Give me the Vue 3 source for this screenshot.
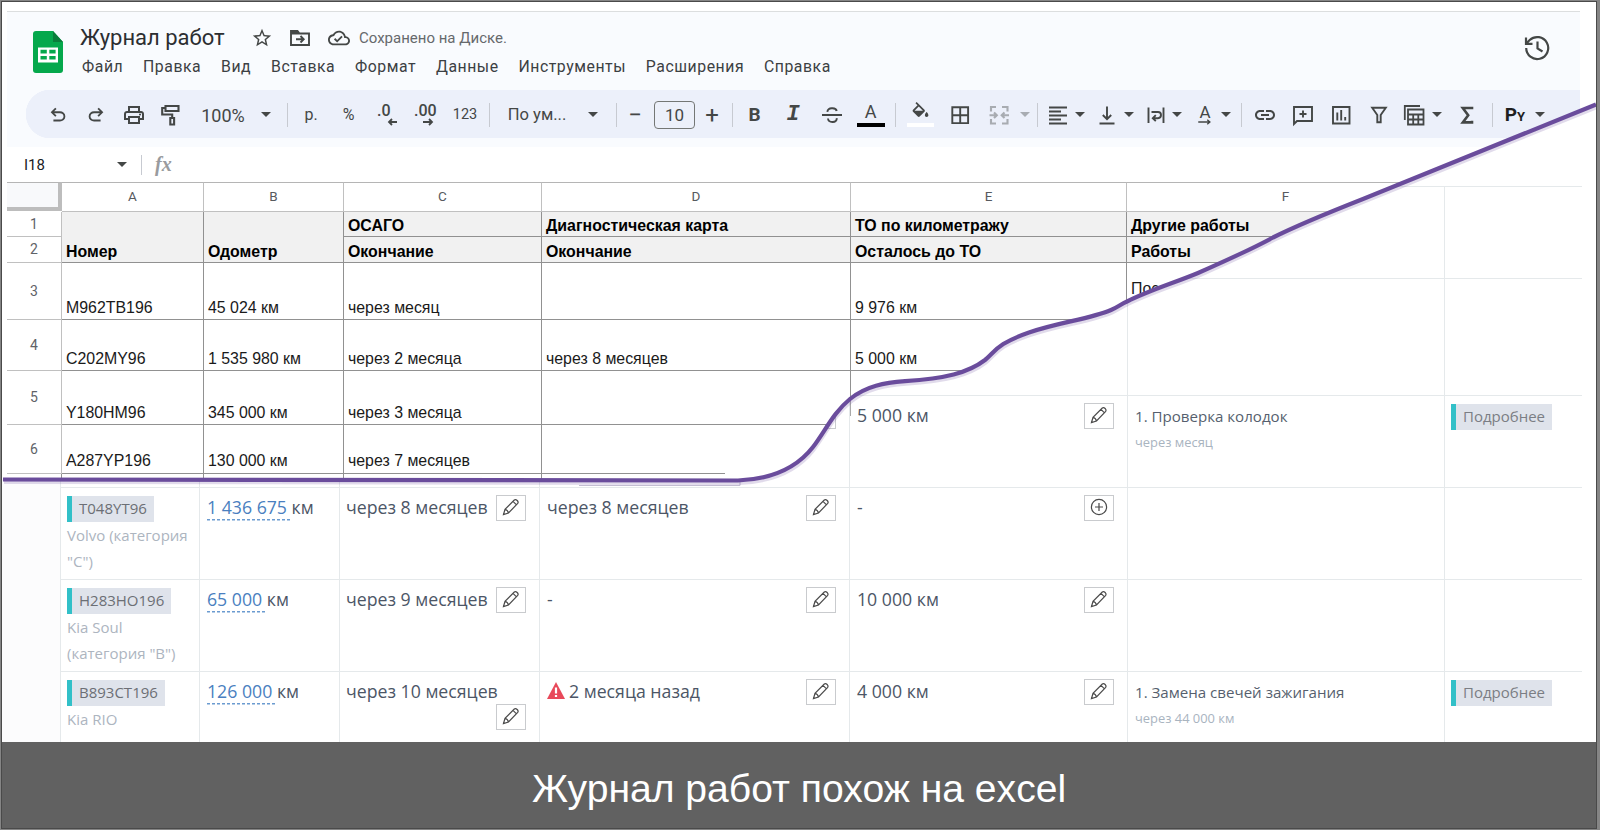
<script setup>
import {computed} from "vue";

const menu = ["Файл", "Правка", "Вид", "Вставка", "Формат", "Данные", "Инструменты", "Расширения", "Справка"]

const icons = {
  undo: {box: "0 -960 960 960", fill: "M280-200v-80h284q63 0 109.5-40T720-420q0-60-46.5-100T564-560H312l104 104-56 56-200-200 200-200 56 56-104 104h252q97 0 166.5 63T800-420q0 94-69.5 157T564-200H280Z"},
  redo: {box: "0 -960 960 960", fill: "M396-200q-97 0-166.5-63T160-420q0-94 69.5-157T396-640h252L544-744l56-56 200 200-200 200-56-56 104-104H396q-63 0-109.5 40T240-420q0 60 46.5 100T396-280h284v80H396Z"},
  print: {box: "0 -960 960 960", fill: "M640-640v-120H320v120h-80v-200h480v200h-80Zm80 180q17 0 28.5-11.5T760-500q0-17-11.5-28.5T720-540q-17 0-28.5 11.5T680-500q0 17 11.5 28.5T720-460Zm-80 260v-160H320v160h320Zm80 80H240v-160H80v-240q0-51 35-85.5t85-34.5h560q51 0 85.5 34.5T880-520v240H720v160Zm80-240v-160q0-17-11.5-28.5T760-560H200q-17 0-28.5 11.5T160-520v160h80v-80h480v80h80Z"},
  paint: {stroke: "M7.5 3h13v5h-13zM7.5 5H4.2v6.5h10V15M12.3 15h3.8v6.5h-3.8z", width: 2.1},
  strike: {stroke: "M2 12h20M7.500 8.800C7 4.500 16 4 16.700 8M8 15.500c.5 5 9.500 4.500 8.700-.3"},
  fill: {fill: "M16.56 8.94L7.62 0 6.21 1.41l2.38 2.38-5.15 5.15c-.59.59-.59 1.54 0 2.12l5.5 5.5c.29.29.68.44 1.06.44s.77-.15 1.06-.44l5.5-5.5c.59-.58.59-1.53 0-2.12zM5.21 10L10 5.21 14.79 10H5.21zM19 11.5s-2 2.17-2 3.5c0 1.1.9 2 2 2s2-.9 2-2c0-1.33-2-3.5-2-3.5z"},
  borders: {stroke: "M4.3 4.3h15.8v15.8H4.3zM12.2 4v16M4 12.2h16"},
  merge: {stroke: "M9 4H4v4.500M15 4h5.500v4.500M9 20.500H4V16M15 20.500h5.500V16M2.500 12.300h7M22 12.300h-7M7 9.500l2.800 2.800L7 15M17.500 9.500l-2.800 2.800 2.800 2.700", width: 2.1},
  align: {stroke: "M3 4.500h18M3 8.500h12M3 12.500h18M3 16.500h12M3 20.500h18"},
  valign: {stroke: "M12 3.500v12.500M7.800 12l4.200 4.200 4.200-4.200M4.500 20.500h15"},
  wrap: {stroke: "M4.500 4.500v15.500M19.500 4.500v15.500M7.500 9h6.500c4 0 4 6.200 0 6.200h-5M11.800 12.200l-3 3 3 3"},
  link: {fill: "M17 7h-4v2h4c1.65 0 3 1.35 3 3s-1.35 3-3 3h-4v2h4c2.76 0 5-2.24 5-5s-2.24-5-5-5zm-6 8H7c-1.65 0-3-1.35-3-3s1.35-3 3-3h4V7H7c-2.76 0-5 2.24-5 5s2.24 5 5 5h4v-2zm-3-4h8v2H8z"},
  comment: {stroke: "M3 21V4h18v14H6zM12 7.500v7M8.500 11h7"},
  chart: {stroke: "M4 4h16.500v16.500H4zM8.300 9.500v8M12.200 7v10.500M16.200 14v3.500"},
  filter: {stroke: "M5.200 4.800h13.600L13.700 12v7.200h-3.400V12z"},
  table: {stroke: "M2.800 17V3H18M6 6.500h15.500v15H6zM6 11.500h15.500M6 16.500h15.500M11.200 11.500v10M16.300 11.500v10", width: 1.8},
  sigma: {stroke: "M17 6.300V5H7.800l5.400 7.200-5.400 7.200H17v-1.600", width: 2.6},
}

// x - left edge, w - width, in toolbar pixels
const tools = [
  {kind: "icon", icon: "undo", x: 20.5, w: 22, cls: "arrow-icon"},
  {kind: "icon", icon: "redo", x: 58.5, w: 22, cls: "arrow-icon"},
  {kind: "icon", icon: "print", x: 96, w: 24},
  {kind: "icon", icon: "paint", x: 132, w: 24},
  {kind: "text", text: "100%", x: 173, w: 48, cls: "zoom"},
  {kind: "caret", x: 235, w: 10},
  {kind: "sep", x: 260.5, w: 1},
  {kind: "text", text: "р.", x: 276, w: 18},
  {kind: "text", text: "%", x: 313.5, w: 18},
  {kind: "decimal", text: ".0", x: 351, w: 23},
  {kind: "decimal", text: ".00", x: 388, w: 23, right: true},
  {kind: "text", text: "123", x: 424, w: 30, cls: "small"},
  {kind: "sep", x: 463, w: 1},
  {kind: "text", text: "По ум...", x: 479, w: 64, cls: "font-name"},
  {kind: "caret", x: 561.5, w: 10},
  {kind: "sep", x: 589.5, w: 1},
  {kind: "text", text: "−", x: 600, w: 18, cls: "sign"},
  {kind: "text", text: "10", x: 628, w: 41, cls: "size-box"},
  {kind: "text", text: "+", x: 677, w: 18, cls: "sign"},
  {kind: "sep", x: 705.5, w: 1},
  {kind: "text", text: "B", x: 719.5, w: 18, cls: "bold"},
  {kind: "text", text: "I", x: 758, w: 18, cls: "italic"},
  {kind: "icon", icon: "strike", x: 793.5, w: 24},
  {kind: "text", text: "A", x: 830.5, w: 28, cls: "color"},
  {kind: "sep", x: 869, w: 1},
  {kind: "icon", icon: "fill", x: 881, w: 27, cls: "bucket"},
  {kind: "icon", icon: "borders", x: 921.5, w: 24},
  {kind: "icon", icon: "merge", x: 961, w: 24, cls: "off"},
  {kind: "caret", x: 993.5, w: 10, cls: "off"},
  {kind: "sep", x: 1011, w: 1},
  {kind: "icon", icon: "align", x: 1020, w: 24},
  {kind: "caret", x: 1048.5, w: 10},
  {kind: "icon", icon: "valign", x: 1069, w: 24},
  {kind: "caret", x: 1098, w: 10},
  {kind: "icon", icon: "wrap", x: 1118, w: 24},
  {kind: "caret", x: 1146, w: 10},
  {kind: "rotate", text: "A", x: 1169, w: 20},
  {kind: "caret", x: 1195, w: 10},
  {kind: "sep", x: 1215, w: 1},
  {kind: "icon", icon: "link", x: 1226.5, w: 24},
  {kind: "icon", icon: "comment", x: 1264.5, w: 24},
  {kind: "icon", icon: "chart", x: 1303, w: 24},
  {kind: "icon", icon: "filter", x: 1341, w: 24},
  {kind: "icon", icon: "table", x: 1376, w: 24},
  {kind: "caret", x: 1406, w: 10},
  {kind: "icon", icon: "sigma", x: 1429, w: 24},
  {kind: "sep", x: 1466, w: 1},
  {kind: "py", x: 1477, w: 24},
  {kind: "caret", x: 1509, w: 10},
]

const toolbar = computed(() => tools.map((tool, i) => {
  const prev = tools[i - 1]
  const gap = prev ? tool.x - prev.x - prev.w : tool.x
  return {...tool, style: {width: tool.w + "px", marginLeft: gap + "px"}}
}))

const letters = ["A", "B", "C", "D", "E", "F"]

const sheetRows = [
  {n: 3, cells: ["M962TB196", "45 024 км", "через месяц", "", "9 976 км", "Пос"]},
  {n: 4, cells: ["C202MY96", "1 535 980 км", "через 2 месяца", "через 8 месяцев", "5 000 км", ""]},
  {n: 5, cells: ["Y180HM96", "345 000 км", "через 3 месяца", "", "", ""]},
  {n: 6, cells: ["A287YP196", "130 000 км", "через 7 месяцев", "", "", ""]},
]

const journal = [
  {},
  {},
  {card: {text: "", icon: "pencil"}, service: {text: "5 000 км", icon: "pencil"}, work: "1. Проверка колодок", when: "через месяц"},
  {
    plate: "T048YT96", model: "Volvo (категория \"C\")", odometer: "1 436 675",
    osago: {text: "через 8 месяцев", icon: "pencil"},
    card: {text: "через 8 месяцев", icon: "pencil"},
    service: {text: "-", icon: "plus"}
  },
  {
    plate: "H283HO196", model: "Kia Soul (категория \"B\")", odometer: "65 000",
    osago: {text: "через 9 месяцев", icon: "pencil"},
    card: {text: "-", icon: "pencil"},
    service: {text: "10 000 км", icon: "pencil"}
  },
  {
    plate: "B893CT196", model: "Kia RIO", odometer: "126 000",
    osago: {text: "через 10 месяцев", icon: "pencil"},
    card: {text: "2 месяца назад", icon: "pencil", alert: true},
    service: {text: "4 000 км", icon: "pencil"},
    work: "1. Замена свечей зажигания", when: "через 44 000 км"
  },
]

// line that separates the spreadsheet from the journal
const curve = "M3 479.5L738 480.5C776 479 799 465 813 447C826 430 833 413 850 399C866 386 885 382.5 905 381.2C945 378.5 968 373 985 360C996 351 996 344 1029 332.5C1060 322 1090 319 1111 310C1118 307 1121 304 1127 301.5C1150 290 1174 283 1198 273C1232 258 1250 250 1273 237.5C1300 224 1330 212 1363 199L1596 104.5"
const sheetClip = `path("${curve}V0H0V480Z")`
</script>

<template>
  <div class="slide">
    <div class="stage">
      <div class="journal">
        <div class="journal-row" v-for="(row, i) in journal" :key="i">
          <div class="gutter"></div>
          <div class="cell">
            <template v-if="row.plate">
              <div class="badge">{{ row.plate }}</div>
              <div class="model">{{ row.model }}</div>
            </template>
          </div>
          <div class="cell">
            <div class="value" v-if="row.odometer"><span class="odometer">{{ row.odometer }}&nbsp;</span>км</div>
          </div>
          <div class="cell editable" v-for="key in ['osago', 'card', 'service']" :key="key" :class="key">
            <template v-if="row[key]">
              <div class="value">
                <svg v-if="row[key].alert" class="alert" viewBox="0 0 18 17">
                  <path d="M9 0L18 17H0Z" fill="#e8495a"/>
                  <path d="M9 5.500v6M9 13v2" stroke="#fff" stroke-width="2.2"/>
                </svg>{{ row[key].text }}
              </div>
              <button class="edit">
                <svg v-if="row[key].icon === 'pencil'" viewBox="0 0 18 18">
                  <path d="M1.500 16.500l1.500-5.200L12.300 2c1.700-1.400 4.800 1.500 3.400 3.400L6.500 15zM3 11.300c1.600.4 3.100 1.900 3.500 3.700M11 3.300l3.500 3.500"/>
                </svg>
                <svg v-else viewBox="0 0 18 18">
                  <circle cx="9" cy="9" r="7.6"/>
                  <path d="M9 5v8M5 9h8"/>
                </svg>
              </button>
            </template>
          </div>
          <div class="cell">
            <div class="work">{{ row.work }}</div>
            <div class="when">{{ row.when }}</div>
          </div>
          <div class="cell">
            <div class="badge more" v-if="row.work">Подробнее</div>
          </div>
        </div>
      </div>

      <div class="sheet">
        <div class="header">
          <svg class="logo" viewBox="0 0 30 42">
            <path d="M3 0h17l10 11v28a3 3 0 0 1-3 3H3a3 3 0 0 1-3-3V3a3 3 0 0 1 3-3z" fill="#05a84c"/>
            <path d="M20 0l10 11H20z" fill="#0a7d3b"/>
            <path d="M5 16.500h20v15H5zM7.500 18.800v3.600h6.300v-3.600zm8.800 0v3.600h6.300v-3.600zM7.500 25v3.600h6.300V25zm8.800 0v3.600h6.300V25z" fill="#fff" fill-rule="evenodd"/>
          </svg>
          <div class="heading">
            <div class="title-row">
              <div class="title">Журнал работ</div>
              <svg class="star" viewBox="0 0 24 24"><path d="M22 9.240l-7.190-.62L12 2 9.190 8.630 2 9.240l5.460 4.730L5.820 21 12 17.270 18.180 21l-1.630-7.030L22 9.240zM12 15.400l-3.760 2.270 1-4.280-3.320-2.880 4.380-.38L12 6.100l1.710 4.040 4.380.38-3.320 2.880 1 4.280L12 15.400z"/></svg>
              <svg class="folder" viewBox="0 0 24 24"><path d="M3 19V5h6.500l2 2.500H21V19zM3 6h7v1.500H3zM8 13.300h7.500M12.500 10l3.200 3.300-3.200 3.200"/></svg>
              <svg class="cloud" viewBox="0 0 24 24"><path d="M19.350 10.040C18.670 6.590 15.640 4 12 4 9.110 4 6.600 5.640 5.350 8.040 2.340 8.360 0 10.910 0 14c0 3.310 2.690 6 6 6h13c2.760 0 5-2.240 5-5 0-2.640-2.050-4.780-4.650-4.960zM19 18H6c-2.210 0-4-1.790-4-4 0-2.050 1.530-3.760 3.560-3.970l1.070-.11.5-.95C8.080 7.140 9.940 6 12 6c2.620 0 4.880 1.860 5.390 4.430l.3 1.500 1.530.11c1.560.1 2.780 1.410 2.780 2.960 0 1.650-1.350 3-3 3zm-9-3.820l-2.090-2.090L6.500 13.500 10 17l6.010-6.010-1.410-1.410z"/></svg>
              <div class="saved">Сохранено на Диске.</div>
            </div>
            <div class="menu">
              <span v-for="item in menu" :key="item">{{ item }}</span>
            </div>
          </div>
          <svg class="history" viewBox="0 0 26 26">
            <path d="M2.200 13a11 11 0 1 0 3.500-8L2.500 8.200M2 2.500v6.300h6.500M13.500 6.500v7l5 3"/>
          </svg>
        </div>

        <div class="toolbar">
          <div v-for="(tool, i) in toolbar" :key="i" class="tool" :class="[tool.kind, tool.cls]" :style="tool.style">
            <svg v-if="tool.kind === 'icon'" :viewBox="icons[tool.icon].box || '0 0 24 24'">
              <path v-if="icons[tool.icon].fill" :d="icons[tool.icon].fill" fill="currentColor"/>
              <path v-else :d="icons[tool.icon].stroke" fill="none" stroke="currentColor" :stroke-width="icons[tool.icon].width || 1.9"/>
            </svg>
            <template v-else-if="tool.kind === 'decimal' || tool.kind === 'rotate'">
              <span>{{ tool.text }}</span>
              <svg class="arrow" viewBox="0 0 20 8">
                <path v-if="tool.kind === 'rotate'" d="M1 4h16M13 1l3.500 3L13 7"/>
                <path v-else-if="tool.right" d="M9 4h9M15 1l3 3-3 3"/>
                <path v-else d="M20 4h-8M15 1l-3 3 3 3"/>
              </svg>
            </template>
            <template v-else-if="tool.kind === 'py'">P<small>Y</small></template>
            <template v-else>{{ tool.text }}</template>
          </div>
        </div>

        <div class="formula">
          <span class="address">I18</span>
          <span class="caret"></span>
          <span class="sep"></span>
          <span class="fx">fx</span>
        </div>

        <div class="table">
          <div class="corner"></div>
          <div class="letter" v-for="letter in letters" :key="letter">{{ letter }}</div>

          <div class="num">1</div>
          <div class="th tall">Номер</div>
          <div class="th tall">Одометр</div>
          <div class="th">ОСАГО</div>
          <div class="th">Диагностическая карта</div>
          <div class="th">ТО по километражу</div>
          <div class="th">Другие работы</div>

          <div class="num">2</div>
          <div class="th">Окончание</div>
          <div class="th">Окончание</div>
          <div class="th">Осталось до ТО</div>
          <div class="th">Работы</div>

          <template v-for="row in sheetRows" :key="row.n">
            <div class="num">{{ row.n }}</div>
            <div class="td" v-for="(cell, i) in row.cells" :key="i" :class="{lifted: i === 5, last: row.n === 6, short: row.n === 6 && i === 3}">{{ cell }}</div>
          </template>
          <div class="tail" v-for="i in 4" :key="'tail' + i"></div>
        </div>
      </div>

      <svg class="divider" viewBox="0 0 1600 742">
        <path d="M850.5 396V416" stroke="#a9a9a9"/>
        <path d="M579 485.5H740V481" stroke="#c3bdd2"/>
        <path class="shade" :d="curve" transform="translate(1 3)"/>
        <path class="line" :d="curve"/>
      </svg>
    </div>
    <div class="caption">Журнал работ похож на excel</div>
  </div>
</template>

<style>
body {
  margin: 0;
}
</style>

<style scoped>
.slide {
  box-sizing: border-box;
  width: 1600px;
  height: 830px;
  overflow: hidden;
  background-color: #fff;
  position: relative;
}

/* dark frame around the whole slide */
.slide::after {
  content: "";
  position: absolute;
  inset: 0;
  z-index: 2;
  border: 1px solid #858585;
  border-right-width: 3px;
  box-shadow: inset 0 0 0 1px #4a4a4a;
  pointer-events: none;
}

.stage {
  display: grid;
  height: 742px;
  overflow: hidden;
}

.journal, .sheet, .divider {
  grid-area: 1 / 1;
}

/* journal */
.journal {
  display: grid;
  grid-template-rows: 92px 117px 92px 92px 92px 71px;
  padding-top: 186px;
  font-family: "Open Sans", "Noto Sans", sans-serif;
}

.journal-row {
  display: grid;
  grid-template-columns: 60px 139px 140px 200px 310px 278px 317px 138px;
  height: 100%;
  min-height: 0;
}

.gutter {
  background-color: #fcfcfd;
}

.cell {
  border-top: 1px solid #e5e9eb;
  border-left: 1px solid #e5e9eb;
  padding: 7px 7px 0 7px;
  min-width: 0;
  min-height: 0;
}

.badge {
  display: block;
  width: max-content;
  height: 26px;
  line-height: 24px;
  margin-top: 1px;
  margin-left: -1px;
  padding: 0 7px;
  border-left: 5px solid #32c0c8;
  background-color: #dfe3eb;
  color: #6c6f75;
  font-size: 15px;
}

.badge.more {
  color: #7b7e84;
}

.model {
  margin-top: 1px;
  margin-left: -1px;
  margin-right: -4px;
  color: #adb5bf;
  font-size: 15px;
  line-height: 25.5px;
}

.value {
  height: 24px;
  line-height: 24px;
  font-size: 17.7px;
  color: #4c5666;
  white-space: nowrap;
}

.odometer {
  display: inline-block;
  height: 26px;
  color: #4a7fc0;
  background: repeating-linear-gradient(90deg, #6b9bd0 0 3px, transparent 3px 5px) 0 24px / 100% 1.5px no-repeat;
}

.editable {
  display: flex;
  flex-wrap: wrap;
  align-content: flex-start;
  justify-content: space-between;
  row-gap: 1px;
  padding-right: 13px;
}

.osago {
  padding-left: 6px;
}

.edit {
  box-sizing: border-box;
  width: 30px;
  height: 26px;
  margin: 0 0 0 auto;
  padding: 0;
  border: 1px solid #c9cbce;
  background-color: #fff;
  display: flex;
  justify-content: center;
  align-items: center;
}

.edit svg {
  width: 18px;
  height: 18px;
  margin-top: -2px;
  fill: none;
  stroke: #4a4a4a;
  stroke-width: 1.2;
}

.alert {
  width: 18px;
  height: 17px;
  margin-right: 4px;
  vertical-align: -1px;
}

.work {
  height: 26px;
  line-height: 26px;
  font-size: 15.1px;
  color: #565f6e;
}

.when {
  line-height: 26px;
  font-size: 12.9px;
  color: #a9b4bf;
}

/* spreadsheet */
.sheet {
  background-color: #fff;
  clip-path: v-bind(sheetClip);
  font-family: Roboto, sans-serif;
  color: #3c4043;
}

.header {
  display: flex;
  box-sizing: border-box;
  height: 79px;
  margin: 11px 20px 0 7px;
  padding-left: 26px;
  border-top: 1px solid #dcdedf;
  background-color: #f9fbfe;
}

.logo {
  width: 30px;
  height: 42px;
  margin-top: 19px;
}

.heading {
  margin-left: 17px;
  margin-top: 11px;
  flex: 1;
}

.title-row {
  display: flex;
  align-items: center;
  height: 30px;
}

.title {
  width: 143px;
  margin-top: -2px;
  font-size: 22px;
  white-space: nowrap;
  color: #2c2e31;
}

.title-row svg {
  fill: #444746;
}

.star {
  width: 22px;
  height: 22px;
  margin-left: 28px;
}

.title-row .folder {
  width: 24px;
  height: 24px;
  margin-left: 15px;
  fill: none;
  stroke: #444746;
  stroke-width: 1.9;
}

.cloud {
  width: 22px;
  height: 22px;
  margin-left: 16px;
}

.saved {
  margin-left: 9px;
  font-size: 15px;
  color: #66696c;
}

.menu {
  display: flex;
  gap: 19.8px;
  margin-top: 4px;
  margin-left: 2px;
  font-size: 15.8px;
  line-height: 20px;
  letter-spacing: 0.55px;
}

.history {
  width: 26px;
  height: 26px;
  margin: 23px 30px 0 0;
  fill: none;
  stroke: #444746;
  stroke-width: 2.2;
}

.toolbar {
  display: flex;
  align-items: center;
  height: 48px;
  margin: 0 20px 0 7px;
  padding-left: 19px;
  background: linear-gradient(#ecf0fa, #ecf0fa) 43px 0 / 100% 100% no-repeat, radial-gradient(circle at 43px 24px, #ecf0fa 24px, #f9fbfe 24.5px);
}

.tool {
  flex: none;
  display: flex;
  align-items: center;
  justify-content: center;
  height: 28px;
  margin-top: 1px;
  font-size: 16px;
  color: #444746;
  white-space: nowrap;
}

.icon svg {
  width: 24px;
  height: 24px;
  flex: none;
}

.arrow-icon svg {
  width: 22px;
  height: 22px;
}

.sep {
  height: 24px;
  background-color: #c7cad1;
}

.caret::before {
  content: "";
  border: 5px solid transparent;
  border-top-color: #444746;
  border-bottom: 0;
}

.off {
  opacity: 0.4;
}

.zoom {
  font-size: 18px;
  padding-top: 1px;
}

.small {
  font-size: 14.5px;
}

.font-name {
  font-size: 16.6px;
}

.sign {
  font-size: 24px;
}

.size-box {
  box-sizing: border-box;
  border: 1px solid #747775;
  border-radius: 4px;
  font-size: 17px;
}

.bold {
  font-size: 19px;
  font-weight: 700;
}

.italic {
  font-family: "Liberation Mono", monospace;
  font-size: 22px;
  font-style: italic;
  font-weight: 700;
}

.color {
  box-sizing: border-box;
  font-size: 18px;
  height: 24px;
  line-height: 20px;
  margin-top: 1px;
  padding-bottom: 2px;
  border-bottom: 4px solid #000;
}

.bucket {
  box-sizing: border-box;
  height: 25px;
  margin-top: 0;
  border-bottom: 4px solid #fff;
}

.bucket svg {
  width: 21px;
  height: 21px;
}

.py {
  align-items: baseline;
  height: 24px;
  font-size: 19px;
  font-weight: 700;
  color: #1f1f1f;
}

.py small {
  font-size: 13px;
}

.decimal, .rotate {
  flex-direction: column;
  justify-content: flex-start;
  font-size: 16px;
  font-weight: 500;
  line-height: 16px;
}

.decimal {
  align-items: flex-start;
  height: 23px;
}

.rotate {
  font-size: 17px;
  font-weight: 400;
  height: 21px;
}

.arrow {
  width: 20px;
  height: 8px;
  margin-top: -1px;
  fill: none;
  stroke: #444746;
  stroke-width: 1.8;
}

.formula {
  display: flex;
  align-items: center;
  box-sizing: border-box;
  height: 44px;
  margin-left: 7px;
  padding: 9px 0 0 17px;
  background: linear-gradient(#f9fbfe, #f9fbfe) 0 0 / 1573px 9px no-repeat;
}

.address {
  width: 93px;
  font-size: 15px;
  color: #202124;
}

.formula .caret {
  display: flex;
}

.formula .sep {
  width: 1px;
  height: 20px;
  margin-left: 14px;
}

.fx {
  margin-left: 13px;
  font-family: "Liberation Serif", serif;
  font-size: 20px;
  font-style: italic;
  font-weight: 700;
  color: #999b9e;
}

.table {
  display: grid;
  grid-template-columns: 55px 142px 140px 198px 309px 276px 318px;
  grid-template-rows: 30px 25px 26px 57px 51px 54px 49px 6px;
  margin-left: 7px;
}

.table > div {
  box-sizing: border-box;
  border-right: 1px solid #919191;
  border-bottom: 1px solid #919191;
}

.table > .corner {
  border-top: 1px solid #b5b5b5;
  border-right: 4px solid #bdbdbd;
  border-bottom: 4px solid #bdbdbd;
  margin-bottom: 1px;
  background-color: #f8f9fb;
}

.table > .letter {
  display: flex;
  align-items: center;
  justify-content: center;
  padding-bottom: 2px;
  border-color: #c0c0c0;
  border-top: 1px solid #b5b5b5;
  font-size: 13.5px;
  color: #575a5e;
}

.table > .num {
  grid-column: 1;
  display: flex;
  align-items: center;
  justify-content: center;
  padding-bottom: 1px;
  border-color: #c0c0c0;
  font-size: 14px;
  color: #5f6368;
}

.th, .td {
  display: flex;
  align-items: flex-end;
  padding: 0 0 2px 4px;
  font-family: "Liberation Sans", Arial, sans-serif;
  font-size: 15.9px;
  line-height: 18px;
  color: #1a1a1a;
  white-space: nowrap;
}

.th {
  padding-bottom: 1px;
  font-size: 15.9px;
  font-weight: 700;
  background-color: #f1f1f1;
  color: #000;
}

.tall {
  grid-row: span 2;
}

.td.last {
  padding-bottom: 3px;
}

.td.lifted {
  padding-bottom: 21px;
}

/* bottom line of the last diagnostic cell stops before the curve */
.table > .short {
  border-bottom-color: transparent;
  background: linear-gradient(#919191, #919191) 0 100% / 183px 1px no-repeat border-box;
}

.table > .tail {
  border-bottom: 0;
}

.divider {
  position: relative;
  z-index: 1;
  width: 1600px;
  height: 742px;
}

.divider path {
  fill: none;
}

.divider .line {
  stroke: #6a4c9c;
  stroke-width: 4.2;
}

.divider .shade {
  stroke: #6a4c9c;
  stroke-width: 3;
  opacity: 0.2;
}

.caption {
  height: 88px;
  box-sizing: border-box;
  padding: 25px 2px 0 0;
  background-color: #616161;
  color: #fff;
  font-family: "Liberation Sans", Arial, sans-serif;
  font-size: 39.1px;
  line-height: 44px;
  text-align: center;
}
</style>
